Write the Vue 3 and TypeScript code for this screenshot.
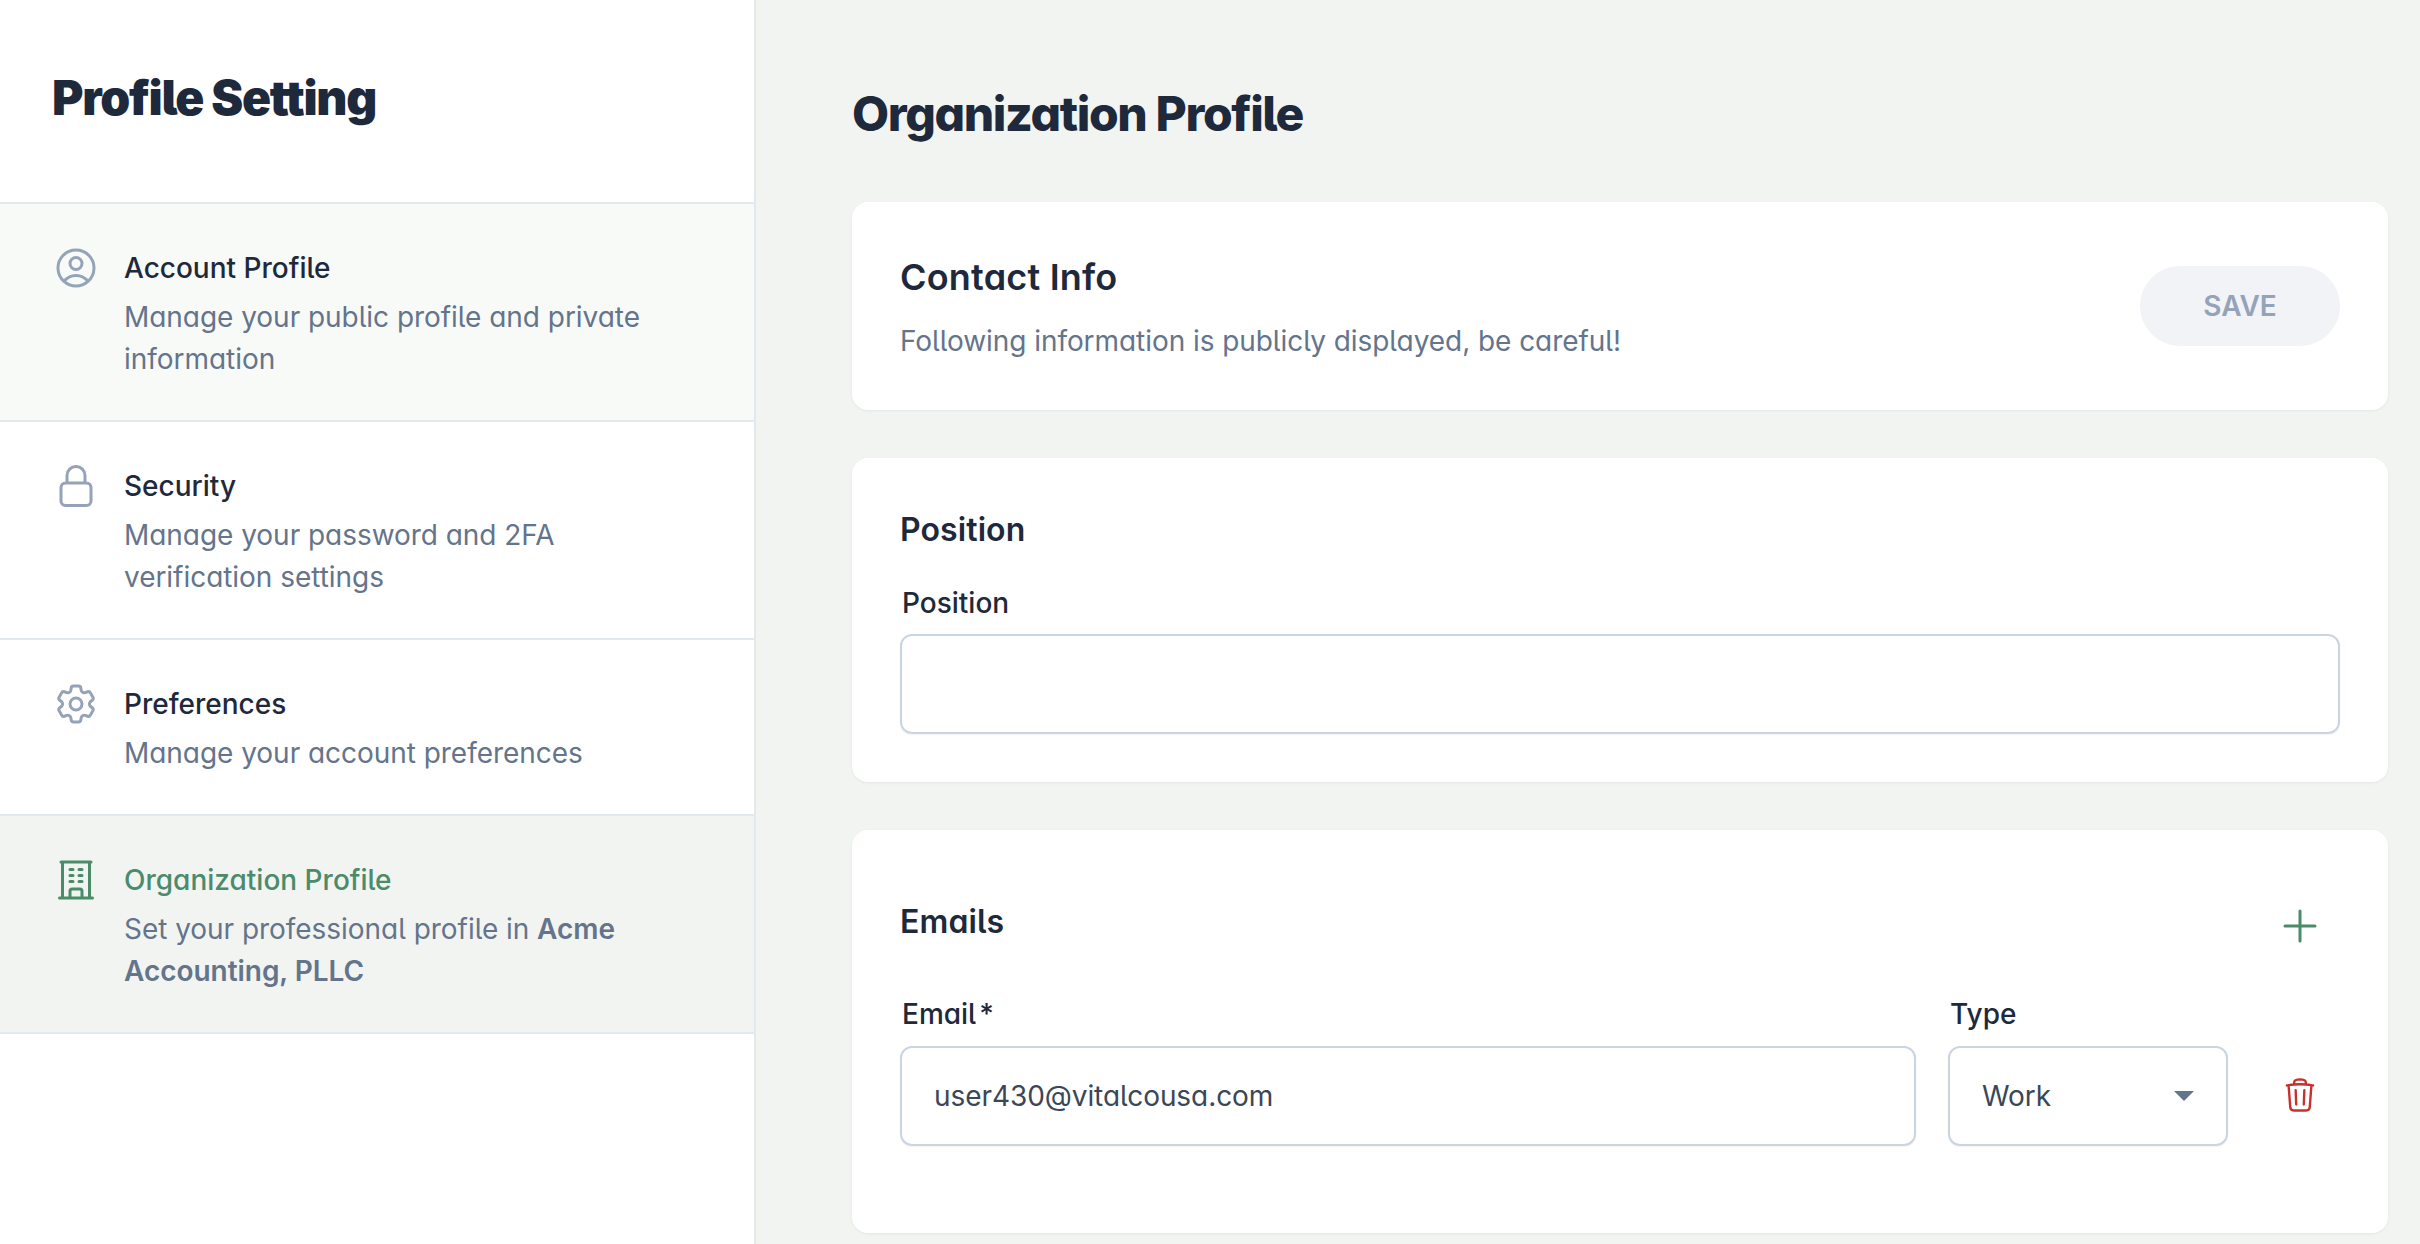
<script setup lang="ts">
interface NavItem {
  title: string
  desc: string
  strong?: string[]
  icon: string[]
  state?: 'soft' | 'active'
}

const items: NavItem[] = [
  {
    title: 'Account Profile',
    desc: 'Manage your public profile and private information',
    state: 'soft',
    icon: ['M17.982 18.725A7.488 7.488 0 0 0 12 15.75a7.488 7.488 0 0 0-5.982 2.975m11.963 0a9 9 0 1 0-11.963 0m11.963 0A8.966 8.966 0 0 1 12 21a8.966 8.966 0 0 1-5.982-2.275M15 9.75a3 3 0 1 1-6 0 3 3 0 0 1 6 0Z']
  },
  {
    title: 'Security',
    desc: 'Manage your password and 2FA verification settings',
    icon: ['M16.5 10.5V6.75a4.5 4.5 0 1 0-9 0v3.75m-.75 11.25h10.5a2.25 2.25 0 0 0 2.25-2.25v-6.75a2.25 2.25 0 0 0-2.25-2.25H6.75a2.25 2.25 0 0 0-2.25 2.25v6.75a2.25 2.25 0 0 0 2.25 2.25Z']
  },
  {
    title: 'Preferences',
    desc: 'Manage your account preferences',
    icon: [
      'M9.594 3.94c.09-.542.56-.94 1.11-.94h2.593c.55 0 1.02.398 1.11.94l.213 1.281c.063.374.313.686.645.87.074.04.147.083.22.127.325.196.72.257 1.075.124l1.217-.456a1.125 1.125 0 0 1 1.37.49l1.296 2.247a1.125 1.125 0 0 1-.26 1.431l-1.003.827c-.293.241-.438.613-.43.992a7.723 7.723 0 0 1 0 .255c-.008.378.137.75.43.991l1.004.827c.424.35.534.955.26 1.43l-1.298 2.247a1.125 1.125 0 0 1-1.369.491l-1.217-.456c-.355-.133-.75-.072-1.076.124a6.47 6.47 0 0 1-.22.128c-.331.183-.581.495-.644.869l-.213 1.281c-.09.543-.56.94-1.11.94h-2.594c-.55 0-1.019-.398-1.11-.94l-.213-1.281c-.062-.374-.312-.686-.644-.87a6.52 6.52 0 0 1-.22-.127c-.325-.196-.72-.257-1.076-.124l-1.217.456a1.125 1.125 0 0 1-1.369-.49l-1.297-2.247a1.125 1.125 0 0 1 .26-1.431l1.004-.827c.292-.24.437-.613.43-.991a6.932 6.932 0 0 1 0-.255c.007-.38-.138-.751-.43-.992l-1.004-.827a1.125 1.125 0 0 1-.26-1.43l1.297-2.247a1.125 1.125 0 0 1 1.37-.491l1.216.456c.356.133.751.072 1.076-.124.072-.044.146-.086.22-.128.332-.183.582-.495.644-.869l.214-1.28Z',
      'M15 12a3 3 0 1 1-6 0 3 3 0 0 1 6 0Z'
    ]
  },
  {
    title: 'Organization Profile',
    desc: 'Set your professional profile in ',
    strong: ['Acme', 'Accounting, PLLC'],
    state: 'active',
    icon: ['M3.75 21h16.5M4.5 3h15M5.25 3v18m13.5-18v18M9 6.75h1.5m-1.5 3h1.5m-1.5 3h1.5m3-6H15m-1.5 3H15m-1.5 3H15M9 21v-3.375c0-.621.504-1.125 1.125-1.125h3.75c.621 0 1.125.504 1.125 1.125V21']
  }
]
</script>

<template>
  <div class="page">
    <aside class="sidebar">
      <header class="side-head">
        <h1 class="side-title">Profile Setting</h1>
      </header>
      <nav>
        <a v-for="item in items" :key="item.title" class="nav-item" :class="item.state">
          <svg class="nav-icon" viewBox="0 0 24 24" fill="none" stroke="currentColor" stroke-width="1.5" stroke-linecap="round" stroke-linejoin="round">
            <path v-for="d in item.icon" :key="d" :d="d" />
          </svg>
          <div class="nav-text">
            <div class="nav-title">{{ item.title }}</div>
            <div class="nav-desc">{{ item.desc }}<template v-for="s in item.strong" :key="s"><strong>{{ s }}</strong>{{ ' ' }}</template></div>
          </div>
        </a>
      </nav>
    </aside>

    <main class="main">
      <h1 class="main-title">Organization Profile</h1>

      <section class="card contact">
        <div class="contact-text">
          <h2 class="contact-title">Contact Info</h2>
          <p class="contact-desc">Following information is publicly displayed, be careful!</p>
        </div>
        <button class="save" type="button">SAVE</button>
      </section>

      <section class="card position">
        <h3 class="sub-title">Position</h3>
        <label class="field-label">Position</label>
        <input class="control" type="text" />
      </section>

      <section class="card emails">
        <div class="emails-head">
          <h3 class="sub-title">Emails</h3>
          <svg class="plus" viewBox="0 0 24 24" fill="none" stroke="currentColor" stroke-width="1.5" stroke-linecap="round" stroke-linejoin="round">
            <path d="M12 4.5v15m7.5-7.5h-15" />
          </svg>
        </div>
        <div class="email-row">
          <div class="email-field">
            <label class="field-label">Email<span class="req">*</span></label>
            <input class="control" type="text" value="user430@vitalcousa.com" />
          </div>
          <div class="type-field">
            <label class="field-label">Type</label>
            <div class="control select">
              <span>Work</span>
              <svg class="caret" viewBox="0 0 20 10"><path d="M0 0h20L10 10Z" fill="currentColor" /></svg>
            </div>
          </div>
          <div class="trash-cell">
            <svg class="trash" viewBox="0 0 24 24" fill="none" stroke="currentColor" stroke-width="1.5" stroke-linecap="round" stroke-linejoin="round">
              <path d="m14.74 9-.346 9m-4.788 0L9.26 9m9.968-3.21c.342.052.682.107 1.022.166m-1.022-.165L18.16 19.673a2.25 2.25 0 0 1-2.244 2.077H8.084a2.25 2.25 0 0 1-2.244-2.077L4.772 5.79m14.456 0a48.108 48.108 0 0 0-3.478-.397m-12 .562c.34-.059.68-.114 1.022-.165m0 0a48.11 48.11 0 0 1 3.478-.397m7.5 0v-.916c0-1.18-.91-2.164-2.09-2.201a51.964 51.964 0 0 0-3.32 0c-1.18.037-2.09 1.022-2.09 2.201v.916m7.5 0a48.667 48.667 0 0 0-7.5 0" />
            </svg>
          </div>
        </div>
      </section>
    </main>
  </div>
</template>

<style>
html, body { margin: 0; background: #f2f4f2; }
</style>

<style scoped>
* { box-sizing: border-box; }
.page {
  display: flex;
  height: 1244px;
  overflow: hidden;
  background: #f2f4f2;
  font-family: Inter, "Noto Sans", sans-serif;
  font-feature-settings: "cv11", "cv05";
  color: #1e293b;
}
.sidebar {
  flex: 0 0 756px;
  background: #fff;
  border-right: 2px solid #e2e8f0;
}
.side-head {
  height: 204px;
  padding: 66px 52px 0;
  border-bottom: 2px solid #e2e8f0;
}
.side-title {
  margin: 0;
  font-size: 48px;
  line-height: 64px;
  font-weight: 900;
  letter-spacing: -1.3px;
}
.nav-item {
  display: flex;
  gap: 24px;
  padding: 40px 52px 40px;
  border-bottom: 2px solid #e2e8f0;
  background: #fff;
}
.nav-item.soft { background: #f8faf8; }
.nav-item.active { background: #f2f4f2; }
.nav-icon {
  flex: none;
  width: 48px;
  height: 48px;
  color: #94a3b8;
}
.active .nav-icon,
.active .nav-title { color: #4b8b6a; }
.nav-title {
  font-size: 28px;
  line-height: 48px;
  font-weight: 500;
  color: #1e293b;
  margin-bottom: 4px;
}
.nav-desc {
  font-size: 28px;
  line-height: 42px;
  letter-spacing: -0.04px;
  color: #64748b;
}
.nav-desc strong { font-weight: 600; }
.main {
  flex: 1;
  min-width: 0;
  padding: 82px 32px 0 96px;
}
.main-title {
  margin: 0 0 56px;
  font-size: 48px;
  line-height: 64px;
  font-weight: 800;
  letter-spacing: -1.37px;
}
.card {
  background: #fff;
  border-radius: 16px;
  padding: 48px;
  margin-bottom: 48px;
  box-shadow: 0 1px 3px rgba(15, 23, 42, 0.06);
}
.contact {
  height: 208px;
  display: flex;
  align-items: center;
  justify-content: space-between;
}
.contact-text { padding-top: 3px; }
.contact-title {
  margin: 0 0 22px;
  font-size: 36px;
  line-height: 44px;
  font-weight: 600;
  letter-spacing: 0.2px;
}
.contact-desc {
  margin: 0;
  font-size: 28px;
  line-height: 40px;
  letter-spacing: -0.06px;
  color: #64748b;
}
.save {
  width: 200px;
  height: 80px;
  border: 0;
  border-radius: 40px;
  background: #f1f3f6;
  color: #94a3b8;
  font: 600 28px Inter, sans-serif;
}
.position { height: 324px; padding-top: 50px; }
.sub-title {
  margin: 0;
  font-size: 32px;
  line-height: 44px;
  font-weight: 600;
  letter-spacing: 0.1px;
}
.field-label {
  display: block;
  margin-left: 2px;
  font-size: 28px;
  line-height: 40px;
  font-weight: 500;
}
.req { margin-left: 3px; }
.position .field-label { margin-top: 31px; margin-bottom: 11px; }
.control {
  display: block;
  width: 100%;
  height: 100px;
  padding: 0 32px;
  border: 2px solid #cbd5e1;
  border-radius: 12px;
  background: #fff;
  box-shadow: 0 1px 2px rgba(15, 23, 42, 0.05);
  font: 400 28px Inter, sans-serif;
  font-feature-settings: "cv11", "cv05";
  letter-spacing: -0.07px;
  color: #3b4658;
  outline: 0;
}
.emails { height: 403px; padding-top: 65px; }
.emails-head {
  display: flex;
  justify-content: space-between;
  align-items: center;
  height: 54px;
  margin-bottom: 45px;
  padding-right: 16px;
}
.plus { width: 48px; height: 48px; color: #4b8b6a; margin-top: 8px; }
.email-row {
  display: flex;
  gap: 32px;
}
.email-field { flex: 0 0 1016px; }
.type-field { flex: 0 0 280px; }
.email-row .field-label { margin-bottom: 12px; }
.select {
  display: flex;
  align-items: center;
  justify-content: space-between;
}
.caret { width: 20px; height: 10px; color: #64748b; }
.trash-cell {
  flex: 1;
  display: flex;
  align-items: center;
  justify-content: center;
  padding-top: 50px;
}
.trash { width: 38px; height: 38px; color: #c9302c; }
</style>
